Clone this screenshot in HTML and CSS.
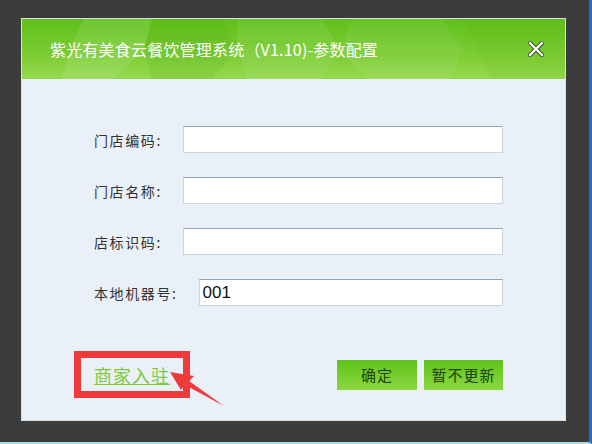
FILE: index.html
```html
<!DOCTYPE html>
<html>
<head>
  <title>参数配置</title>
  <meta charset="UTF-8">
  <link rel="stylesheet" href="styles.css">
</head>
<body>
  <div class="screen">
    <div class="dialog">
      <div class="header">
        <svg class="facets" width="543" height="60" viewBox="0 0 543 60">
          <polygon points="62,0 130,0 122,30 92,60 40,60 48,30" fill="#fff" opacity="0.10"/>
          <polygon points="130,0 200,0 215,30 190,60 130,60 122,30" fill="#3f9a08" opacity="0.12"/>
          <polygon points="215,0 300,0 318,30 300,60 225,60 215,30" fill="#fff" opacity="0.07"/>
          <polygon points="330,0 420,0 440,30 430,60 345,60 318,30" fill="#fff" opacity="0.06"/>
          <polygon points="440,0 543,0 543,60 470,60 455,30" fill="#3f9a08" opacity="0.06"/>
        </svg>
        <span class="title">紫光有美食云餐饮管理系统（V1.10)-参数配置</span>
        <svg class="close" width="16" height="16" viewBox="0 0 16 16">
          <path d="M2 2 L14 14 M14 2 L2 14" stroke="#2a3a20" stroke-width="4" stroke-linecap="square"/>
          <path d="M2 2 L14 14 M14 2 L2 14" stroke="#fff" stroke-width="2.4" stroke-linecap="square"/>
        </svg>
      </div>
      <div class="form">
        <div class="row">
          <label>门店编码:</label>
          <input type="text">
        </div>
        <div class="row">
          <label>门店名称:</label>
          <input type="text">
        </div>
        <div class="row">
          <label>店标识码:</label>
          <input type="text">
        </div>
        <div class="row">
          <label>本地机器号:</label>
          <input type="text" class="num" value="001">
        </div>
      </div>
      <div class="footer">
        <span class="mark"><a href="#" class="join">商家入驻</a></span>
        <div class="buttons">
          <button class="btn ok">确定</button>
          <button class="btn">暂不更新</button>
        </div>
        <svg class="arrow" width="70" height="50" viewBox="0 0 70 50">
          <polygon points="0,0 24,4 19,9 54,34 15,13 11,18" fill="#f03a3a"/>
        </svg>
      </div>
    </div>
  </div>
</body>
</html>
```

FILE: styles.css
```css
body {
  margin: 0;
  font-family: "Noto Sans CJK SC", "Liberation Sans", sans-serif;
}
.screen {
  width: 592px;
  height: 444px;
  box-sizing: border-box;
  background: #3c3c3c;
  border-right: 3px solid #1d6fd2;
  border-bottom: 2px solid #a6dbe6;
  padding: 18px 0 0 21px;
}
.dialog {
  width: 545px;
  height: 403px;
  box-sizing: border-box;
  border: 1px solid #d9dfe6;
  background: #e9f0f8;
}
.header {
  position: relative;
  height: 60px;
  display: flex;
  align-items: center;
  justify-content: space-between;
  padding: 0 21px 0 28px;
  background: linear-gradient(#60c01b, #7ccd34 60%, #96d950);
  overflow: hidden;
}
.facets {
  position: absolute;
  left: 0;
  top: 0;
}
.title {
  position: relative;
  color: #fff;
  font-size: 16px;
  letter-spacing: 0.2px;
}
.close {
  position: relative;
}
.form {
  padding: 47px 62px 0 72px;
  display: flex;
  flex-direction: column;
  gap: 24px;
}
.row {
  display: flex;
  align-items: center;
  gap: 21px;
  height: 27px;
}
.row label {
  font-size: 14px;
  letter-spacing: 1.6px;
  color: #333;
}
.row input {
  flex: 1;
  height: 27px;
  box-sizing: border-box;
  border: 1px solid #c9d5e2;
  border-top-color: #8ea3b9;
  background: #fff;
  padding: 0 3px;
  outline: none;
}
.row input.num {
  font-family: "Liberation Sans", sans-serif;
  font-size: 17px;
  color: #111;
}
.footer {
  position: relative;
  margin-top: 45px;
  padding: 0 62px 0 52px;
  display: flex;
  align-items: center;
  justify-content: space-between;
}
.mark {
  border: 7px solid #f03a3a;
  height: 33px;
  padding: 0 13px;
  display: flex;
  align-items: center;
}
.join {
  color: #7dc93a;
  font-size: 18px;
  letter-spacing: 1px;
  text-decoration: underline;
}
.buttons {
  display: flex;
  gap: 7px;
}
.btn {
  width: 79px;
  height: 30px;
  border: none;
  background: linear-gradient(#5ec31a, #8cd640);
  color: #1d440b;
  font-family: "Noto Sans CJK SC", sans-serif;
  font-size: 15px;
  letter-spacing: 1px;
  padding: 0;
}
.btn.ok {
  width: 80px;
}
.arrow {
  position: absolute;
  left: 148px;
  top: 21px;
}
```
